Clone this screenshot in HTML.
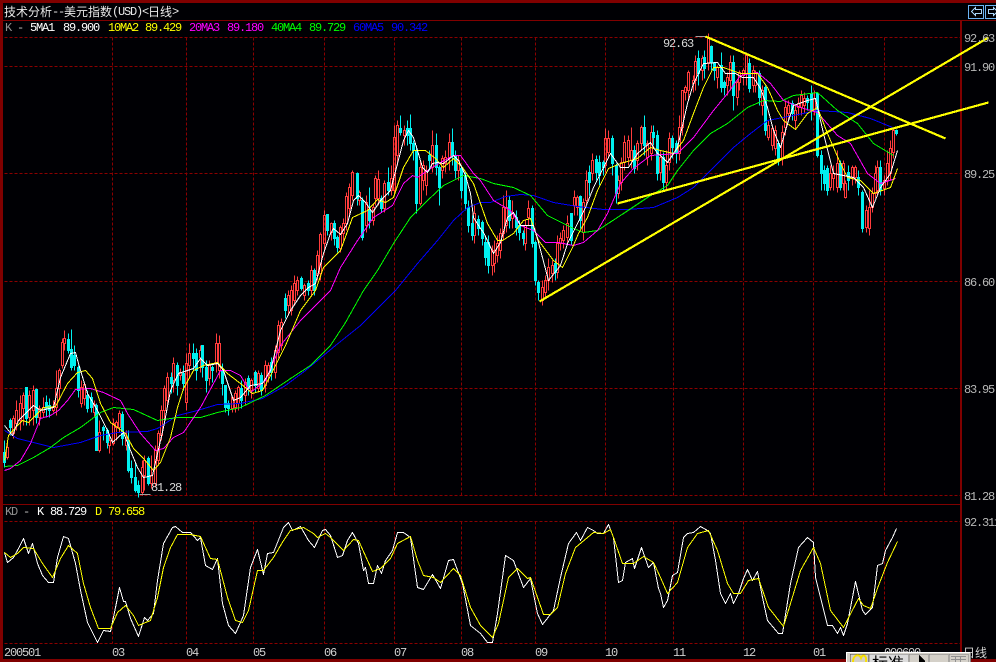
<!DOCTYPE html>
<html><head><meta charset="utf-8"><style>
html,body{margin:0;padding:0;background:#000;overflow:hidden}
svg{display:block}
text{font-family:"Liberation Mono",monospace;font-size:12px;letter-spacing:-1.2px;white-space:pre}
.c{font-family:"WenQuanYi Zen Hei","Noto Sans CJK SC",sans-serif;letter-spacing:0}
.g{fill:#b8b8b8}.l{fill:#d8d8d8}
</style></head><body>
<svg width="996" height="662" viewBox="0 0 996 662" xmlns="http://www.w3.org/2000/svg">
<rect width="996" height="662" fill="#000004"/>
<g shape-rendering="crispEdges">
<g fill="none" stroke="#8b0000" stroke-dasharray="3 2" transform="translate(.5,.5)">
<path d="M4 37H960M4 66H960M4 173H960M4 281H960M4 388H960M4 495H960M4 521H960M4 643H960"/>
<path d="M112 37V495M186 37V495M253 37V495M324 37V495M394 37V495M461 37V495M535 37V495M605 37V495M673 37V495M743 37V495M813 37V495M884 37V495M112 521V643M186 521V643M253 521V643M324 521V643M394 521V643M461 521V643M535 521V643M605 521V643M673 521V643M743 521V643M813 521V643M884 521V643"/>
</g>
<rect x="0" y="0" width="996" height="3" fill="#800000"/>
<rect x="0" y="0" width="3" height="662" fill="#800000"/>
<rect x="0" y="20" width="996" height="1" fill="#800000"/>
<rect x="0" y="504" width="961" height="1" fill="#800000"/>
<rect x="960" y="20" width="2" height="642" fill="#800000"/>
<rect x="0" y="659" width="996" height="3" fill="#800000"/>
<g transform="translate(.5,.5)" stroke-width="1">
<path fill="none" stroke="#ff3c3c" d="M7 443V447M6 447h2V457h-2zM7 457V459M13 415V418M12 418h2V433h-2zM13 433V438M16 400V410M15 410h2V423h-2zM16 423V430M20 395V403M19 403h2V420h-2zM20 420V430M23 392V395M22 395h2V408h-2zM23 408V425M29 390V395M28 395h2V417h-2zM29 417V425M33 385V390M32 390h2V410h-2zM33 410V425M39 405V408M38 408h2V417h-2zM39 417V425M43 397V407M42 407h2V412h-2zM43 412V417M53 400V407M52 407h2V410h-2zM53 410V412M56 370V388M55 388h2V407h-2zM56 407V415M59 368V370M58 370h2V388h-2zM59 388V400M62 338V342M61 342h2V365h-2zM62 365V368M64 330V338M63 338h2V343h-2zM64 343V350M81 380V387M80 387h2V403h-2zM81 403V407M84 383V384M83 384h2V398h-2zM84 398V405M94 400V404M93 404h2V412h-2zM94 412V416M99 420V432M98 432h2V450h-2zM99 450V452M109 435V440M108 440h2V445h-2zM109 445V453M113 418V423M112 423h2V443h-2zM113 443V445M116 420V422M115 422h2V427h-2zM116 427V440M119 410V413M118 413h2V427h-2zM119 427V432M126 430V437M125 437h2V445h-2zM126 445V450M142 460V467M141 467h2V492h-2zM142 492V495M144 455V460M143 460h2V475h-2zM144 475V490M151 455V475M150 475h2V483h-2zM151 483V488M155 445V450M154 450h2V483h-2zM155 483V487M158 430V433M157 433h2V460h-2zM158 460V465M161 405V410M160 410h2V435h-2zM161 435V440M164 385V388M163 388h2V410h-2zM164 410V420M167 372V377M166 377h2V400h-2zM167 400V405M173 357V363M172 363h2V380h-2zM173 380V392M180 368V372M179 372h2V375h-2zM180 375V380M186 353V363M185 363h2V402h-2zM186 402V410M189 343V353M188 353h2V365h-2zM189 365V378M200 345V350M199 350h2V357h-2zM200 357V372M209 360V365M208 365h2V378h-2zM209 378V385M216 333V343M215 343h2V362h-2zM216 362V372M219 335V343M218 343h2V370h-2zM219 370V378M232 397V397M231 397h2V408h-2zM232 408V412M235 390V393M234 393h2V407h-2zM235 407V412M238 385V387M237 387h2V403h-2zM238 403V410M245 378V382M244 382h2V395h-2zM245 395V405M251 378V380M250 380h2V390h-2zM251 390V398M258 370V373M257 373h2V388h-2zM258 388V392M265 360V365M264 365h2V385h-2zM265 385V392M268 362V365M267 365h2V375h-2zM268 375V382M275 345V350M274 350h2V372h-2zM275 372V378M278 320V325M277 325h2V352h-2zM278 352V358M281 318V322M280 322h2V345h-2zM281 345V350M288 290V295M287 295h2V305h-2zM288 305V315M291 285V290M290 290h2V310h-2zM291 310V315M294 275V283M293 283h2V300h-2zM294 300V305M297 276V280M296 280h2V290h-2zM297 290V295M304 283V285M303 285h2V295h-2zM304 295V300M311 265V270M310 270h2V290h-2zM311 290V295M317 250V255M316 255h2V275h-2zM317 275V280M320 232V234M319 234h2V273h-2zM320 273V280M324 210V215M323 215h2V243h-2zM324 243V250M331 222V223M330 223h2V232h-2zM331 232V240M340 225V227M339 227h2V248h-2zM340 248V252M343 218V223M342 223h2V233h-2zM343 233V240M346 192V196M345 196h2V223h-2zM346 223V230M349 183V187M348 187h2V208h-2zM349 208V215M352 170V172M351 172h2V195h-2zM352 195V200M359 190V192M358 192h2V200h-2zM359 200V205M366 195V202M365 202h2V225h-2zM366 225V232M373 203V207M372 207h2V220h-2zM373 220V225M375 175V178M374 178h2V198h-2zM375 198V205M378 170V179M377 179h2V198h-2zM378 198V205M384 180V183M383 183h2V208h-2zM384 208V212M391 165V178M390 178h2V190h-2zM391 190V195M394 125V137M393 137h2V190h-2zM394 190V195M397 120V125M396 125h2V155h-2zM397 155V165M404 125V130M403 130h2V135h-2zM404 135V145M420 160V167M419 167h2V203h-2zM420 203V205M423 160V165M422 165h2V180h-2zM423 180V190M426 165V170M425 170h2V185h-2zM426 185V195M432 130V145M431 145h2V167h-2zM432 167V172M442 155V158M441 158h2V170h-2zM442 170V178M445 150V157M444 157h2V163h-2zM445 163V172M449 133V142M448 142h2V157h-2zM449 157V170M458 155V160M457 160h2V170h-2zM458 170V180M474 205V213M473 213h2V235h-2zM474 235V243M492 245V250M491 250h2V265h-2zM492 265V275M494 240V250M493 250h2V263h-2zM494 263V272M497 235V243M496 243h2V255h-2zM497 255V262M500 228V233M499 233h2V250h-2zM500 250V258M503 195V207M502 207h2V233h-2zM503 233V240M506 190V207M505 207h2V225h-2zM506 225V232M512 200V212M511 212h2V218h-2zM512 218V228M525 220V225M524 225h2V243h-2zM525 243V250M528 200V208M527 208h2V217h-2zM528 217V225M542 280V287M541 287h2V300h-2zM542 300V305M545 275V280M544 280h2V292h-2zM545 292V297M548 258V267M547 267h2V280h-2zM548 280V290M552 260V265M551 265h2V273h-2zM552 273V282M557 235V243M556 243h2V272h-2zM557 272V278M560 232V238M559 238h2V243h-2zM560 243V250M563 225V230M562 230h2V240h-2zM563 240V248M567 215V223M566 223h2V237h-2zM567 237V243M574 190V197M573 197h2V205h-2zM574 205V215M577 195V197M576 197h2V207h-2zM577 207V215M583 198V202M582 202h2V232h-2zM583 232V240M586 170V180M585 180h2V200h-2zM586 200V205M592 153V160M591 160h2V173h-2zM592 173V180M605 128V138M604 138h2V165h-2zM605 165V172M608 130V138M607 138h2V152h-2zM608 152V158M618 175V180M617 180h2V193h-2zM618 193V198M621 157V162M620 162h2V182h-2zM621 182V190M624 135V142M623 142h2V162h-2zM624 162V170M628 135V140M627 140h2V157h-2zM628 157V165M631 127V150M630 150h2V160h-2zM631 160V168M637 140V143M636 143h2V160h-2zM637 160V170M641 125V127M640 127h2V143h-2zM641 143V150M647 140V143M646 143h2V157h-2zM647 157V165M651 125V132M650 132h2V153h-2zM651 153V160M660 150V157M659 157h2V172h-2zM660 172V180M666 150V165M665 165h2V182h-2zM666 182V190M669 132V138M668 138h2V162h-2zM669 162V170M679 115V127M678 127h2V153h-2zM679 153V160M682 90V90M681 90h2V127h-2zM682 127V135M685 85V87M684 87h2V92h-2zM685 92V100M688 70V72M687 72h2V90h-2zM688 90V100M693 75V80M692 80h2V83h-2zM693 83V92M695 55V61M694 61h2V80h-2zM695 80V90M702 55V58M701 58h2V70h-2zM702 70V80M708 33V37M707 37h2V63h-2zM708 63V70M717 65V67M716 67h2V77h-2zM717 77V88M727 72V77M726 77h2V85h-2zM727 85V95M730 55V62M729 62h2V80h-2zM730 80V90M737 80V82M736 82h2V97h-2zM737 97V105M739 70V72M738 72h2V82h-2zM739 82V90M743 68V70M742 70h2V75h-2zM743 75V85M746 52V55M745 55h2V73h-2zM746 73V85M753 65V70M752 70h2V85h-2zM753 85V92M755 70V73M754 73h2V85h-2zM755 85V92M762 85V90M761 90h2V105h-2zM762 105V115M768 120V125M767 125h2V137h-2zM768 137V140M772 125V128M771 128h2V145h-2zM772 145V150M775 125V130M774 130h2V148h-2zM775 148V155M782 125V132M781 132h2V158h-2zM782 158V165M785 100V107M784 107h2V127h-2zM785 127V135M788 100V105M787 105h2V113h-2zM788 113V120M795 105V110M794 110h2V120h-2zM795 120V128M798 97V103M797 103h2V107h-2zM798 107V115M801 90V95M800 95h2V107h-2zM801 107V115M804 92V98M803 98h2V105h-2zM804 105V112M814 90V98M813 98h2V110h-2zM814 110V115M830 165V173M829 173h2V187h-2zM830 187V190M833 165V173M832 173h2V178h-2zM833 178V190M837 150V163M836 163h2V187h-2zM837 187V192M843 160V163M842 163h2V183h-2zM843 183V190M845 180V183M844 183h2V197h-2zM845 197V198M852 165V167M851 167h2V177h-2zM852 177V185M855 165V167M854 167h2V177h-2zM855 177V183M866 205V210M865 210h2V227h-2zM866 227V232M869 190V207M868 207h2V228h-2zM869 228V235M872 187V193M871 193h2V207h-2zM872 207V212M875 165V173M874 173h2V193h-2zM875 193V198M877 160V167M876 167h2V190h-2zM877 190V195M884 175V180M883 180h2V188h-2zM884 188V195M887 150V163M886 163h2V180h-2zM887 180V185M890 140V148M889 148h2V173h-2zM890 173V180M893 128V130M892 130h2V152h-2zM893 152V158"/>
<path fill="#00f0f0" stroke="#00f0f0" d="M4 440V467M3 452h2V462h-2zM10 418V435M9 420h2V427h-2zM26 387V425M25 387h2V418h-2zM36 388V423M35 389h2V417h-2zM46 395V417M45 402h2V408h-2zM49 398V417M48 405h2V410h-2zM68 333V353M67 339h2V350h-2zM71 329V370M70 349h2V367h-2zM74 345V370M73 355h2V365h-2zM78 365V397M77 367h2V390h-2zM87 390V412M86 395h2V408h-2zM91 392V412M90 397h2V407h-2zM96 403V450M95 405h2V450h-2zM103 425V440M102 427h2V430h-2zM107 428V448M106 430h2V442h-2zM122 411V445M121 414h2V438h-2zM128 430V472M127 440h2V470h-2zM131 460V483M130 468h2V477h-2zM135 463V492M134 477h2V490h-2zM138 480V497M137 485h2V492h-2zM148 456V485M147 458h2V483h-2zM171 372V393M170 377h2V383h-2zM177 362V395M176 365h2V385h-2zM183 365V390M182 373h2V383h-2zM193 343V370M192 353h2V358h-2zM196 348V380M195 353h2V370h-2zM202 345V377M201 345h2V367h-2zM206 360V392M205 367h2V380h-2zM212 365V382M211 367h2V370h-2zM222 363V395M221 370h2V383h-2zM225 385V412M224 385h2V407h-2zM228 400V415M227 403h2V408h-2zM241 380V408M240 388h2V400h-2zM248 375V395M247 378h2V388h-2zM255 370V392M254 372h2V385h-2zM261 372V395M260 375h2V390h-2zM271 357V380M270 362h2V372h-2zM285 293V318M284 298h2V310h-2zM301 276V290M300 278h2V288h-2zM308 280V295M307 283h2V290h-2zM314 268V295M313 270h2V290h-2zM327 214V235M326 214h2V230h-2zM334 220V245M333 223h2V238h-2zM337 235V252M336 237h2V247h-2zM357 172V205M356 173h2V198h-2zM362 197V240M361 200h2V237h-2zM369 187V228M368 209h2V220h-2zM381 195V212M380 198h2V208h-2zM388 167V195M387 182h2V190h-2zM400 115V135M399 128h2V132h-2zM407 120V145M406 128h2V135h-2zM410 114V150M409 128h2V143h-2zM413 140V160M412 143h2V150h-2zM416 145V213M415 150h2V203h-2zM429 150V170M428 155h2V160h-2zM436 133V175M435 145h2V167h-2zM439 165V205M438 167h2V187h-2zM452 128V165M451 142h2V155h-2zM455 150V178M454 155h2V170h-2zM461 165V198M460 168h2V190h-2zM465 172V210M464 175h2V203h-2zM468 200V232M467 207h2V225h-2zM472 215V240M471 223h2V235h-2zM478 215V235M477 219h2V228h-2zM482 220V245M481 222h2V238h-2zM485 235V265M484 242h2V257h-2zM488 235V273M487 242h2V265h-2zM509 195V228M508 200h2V220h-2zM516 210V235M515 217h2V227h-2zM519 220V240M518 225h2V232h-2zM523 230V245M522 233h2V238h-2zM532 205V247M531 208h2V243h-2zM535 240V285M534 242h2V280h-2zM538 280V300M537 282h2V292h-2zM555 258V280M554 263h2V272h-2zM571 213V245M570 213h2V240h-2zM580 195V228M579 196h2V220h-2zM589 165V195M588 172h2V182h-2zM596 155V180M595 159h2V172h-2zM599 155V185M598 162h2V175h-2zM603 160V175M602 162h2V167h-2zM612 135V175M611 138h2V163h-2zM616 163V203M615 165h2V193h-2zM634 145V173M633 150h2V168h-2zM644 115V155M643 127h2V145h-2zM653 125V145M652 132h2V137h-2zM657 130V180M656 135h2V173h-2zM663 152V190M662 157h2V182h-2zM672 135V158M671 138h2V147h-2zM676 140V163M675 143h2V153h-2zM698 50V85M697 58h2V73h-2zM704 50V78M703 57h2V68h-2zM711 45V70M710 46h2V62h-2zM714 62V80M713 62h2V70h-2zM721 52V92M720 65h2V87h-2zM724 80V95M723 82h2V87h-2zM733 55V110M732 62h2V95h-2zM749 58V92M748 63h2V88h-2zM759 70V105M758 73h2V97h-2zM765 85V135M764 87h2V130h-2zM778 140V165M777 143h2V158h-2zM792 100V120M791 103h2V113h-2zM807 95V110M806 98h2V102h-2zM811 85V120M810 93h2V110h-2zM817 92V157M816 93h2V155h-2zM821 150V190M820 155h2V173h-2zM824 165V190M823 170h2V183h-2zM827 165V195M826 168h2V190h-2zM840 160V190M839 163h2V187h-2zM848 165V190M847 172h2V180h-2zM858 170V195M857 177h2V187h-2zM862 190V232M861 192h2V228h-2zM880 160V195M879 167h2V190h-2zM896 129V135M895 130h2V133h-2z"/>
<g fill="none" stroke-linejoin="round">
<polyline stroke="#0000ff" points="4,430 17,438 37,443 53,447 80,442 100,435 117,432 147,431 157,428 177,415 197,410 217,404 240,403 262,398 285,385 305,370 335,345 360,325 395,290 417,263 437,240 453,220 467,207 480,202 490,202 505,196 520,194 533,195 553,202 577,206 603,209 627,209 653,207 677,197 693,187 713,167 733,147 750,133 767,120 793,115 817,110 847,112 870,118 892,127"/>
<polyline stroke="#00ff00" points="4,466 17,465 33,457 50,447 63,437 80,427 100,412 113,407 133,409 157,420 177,417 200,417 217,412 240,407 265,395 290,378 310,365 330,345 345,322 363,290 377,270 393,243 410,217 427,200 443,185 463,175 480,178 493,183 513,187 530,195 547,215 573,228 583,232 597,230 623,213 647,197 667,185 677,170 693,150 710,133 727,123 747,107 763,100 780,101 793,95 817,92 837,110 857,123 873,143 893,155"/>
<polyline stroke="#ff00ff" points="4,470 10,468 20,460 30,443 40,418 50,415 58,410 67,400 75,389 90,388 103,392 120,400 127,413 140,433 155,450 163,448 173,437 183,432 200,407 213,383 220,370 230,370 240,375 250,392 265,380 280,345 300,320 315,305 330,290 340,267 357,240 373,217 392,205 403,183 412,175 417,177 430,168 440,162 453,155 460,155 473,173 480,180 493,200 510,210 520,225 533,230 545,242 558,242 573,245 583,242 597,230 607,213 620,183 633,168 650,155 677,153 693,137 713,110 727,93 740,75 757,72 770,83 783,100 800,107 817,112 837,135 850,143 867,173 880,183 895,178"/>
<polyline stroke="#ffff00" points="4,460 8,435 17,425 22,420 28,422 37,413 43,407 55,406 67,383 77,372 85,370 92,378 100,403 110,422 117,427 125,433 133,448 143,458 153,470 160,462 170,437 177,407 183,388 193,370 203,365 217,362 227,373 240,383 252,393 262,390 270,375 285,345 300,310 315,290 323,267 340,250 352,217 367,210 377,199 385,202 393,197 403,167 413,150 425,150 435,158 443,167 453,158 462,167 473,183 480,203 487,223 497,240 502,240 513,233 523,220 530,218 538,240 553,260 562,267 572,247 578,233 587,217 597,190 608,168 620,163 637,158 650,147 660,150 673,153 683,140 693,113 703,87 713,67 723,67 740,73 757,73 767,87 777,110 783,120 795,129 807,113 817,107 827,133 840,163 847,177 860,180 873,193 890,187 897,168"/>
<polyline stroke="#ffffff" points="4,425 12,435 18,420 25,413 33,405 40,410 53,407 60,377 70,353 75,352 78,363 87,393 97,410 107,430 112,442 123,432 130,450 137,467 143,477 152,475 157,453 163,427 170,390 178,373 193,368 200,358 207,365 217,363 223,370 233,400 240,397 250,385 262,383 270,370 280,330 290,310 300,295 308,287 315,283 323,253 330,233 333,228 340,234 347,223 353,200 358,195 365,202 372,212 380,200 390,190 397,163 403,140 408,130 413,137 417,150 422,167 427,172 432,163 437,162 443,163 453,155 458,160 465,175 470,193 473,217 480,228 483,232 493,253 500,242 507,217 513,212 520,225 533,225 538,242 548,280 560,265 567,243 577,223 585,207 593,187 600,173 610,153 620,167 628,167 637,153 650,142 657,153 660,155 667,162 677,147 687,103 693,83 703,63 717,62 725,73 735,73 742,77 753,77 760,88 767,107 773,130 780,147 788,120 793,105 807,100 815,98 823,133 833,173 853,177 863,187 872,207 880,187 890,173 897,150"/>
<polyline stroke="#ffffff" points="4,552 7,562 13,557 18,548 23,538 28,553 32,543 37,563 42,575 48,582 53,582 57,557 63,536 68,538 75,563 80,590 87,622 97,642 103,630 110,631 115,607 119,587 123,601 125,601 130,618 138,636 144,617 147,620 153,613 157,580 163,543 172,527 175,526 182,532 190,532 197,540 200,537 205,565 212,569 217,558 222,603 228,625 235,633 243,615 250,567 257,549 263,574 267,553 273,552 283,527 288,522 292,530 300,526 308,540 314,547 322,530 325,529 330,535 337,557 342,555 347,540 352,532 358,543 363,570 365,567 368,583 373,583 377,565 381,573 385,560 392,550 397,532 403,532 410,537 417,587 423,589 432,574 440,588 448,560 453,559 462,583 470,625 480,633 487,642 492,642 497,613 505,555 513,560 523,587 530,578 537,613 542,624 553,610 560,577 568,543 576,532 580,540 587,527 593,530 597,533 603,533 608,524 613,537 618,582 622,580 625,562 632,558 634,568 641,547 648,567 653,562 658,588 660,593 663,607 667,600 672,575 677,572 683,537 687,533 693,532 700,526 707,530 710,533 715,560 720,593 725,603 730,593 733,603 738,593 743,578 747,569 752,580 757,571 762,597 767,620 778,633 782,633 790,583 798,547 807,537 813,542 815,577 827,625 832,625 837,633 840,627 843,635 847,623 855,581 862,610 865,614 872,607 877,565 882,563 885,550 892,537 896,528"/>
<polyline stroke="#ffff00" points="4,552 10,557 17,553 23,547 33,548 42,563 52,577 60,558 68,545 77,553 83,583 90,607 98,628 110,628 117,612 125,605 133,615 138,625 150,620 157,597 163,567 170,547 177,534 190,534 200,536 210,558 217,559 227,597 235,620 242,622 248,610 257,570 263,570 273,557 283,540 290,530 303,527 313,533 317,537 325,533 330,537 343,550 353,539 358,540 372,571 380,568 390,558 397,543 410,536 417,560 423,575 433,577 440,582 453,568 460,575 470,607 480,625 492,637 498,623 508,577 517,568 527,578 530,577 543,614 550,614 557,607 565,573 575,547 593,532 603,533 610,529 613,537 622,563 633,563 643,556 653,562 660,577 667,593 677,582 687,547 697,533 708,530 717,550 727,583 733,593 740,593 748,580 758,578 768,607 783,626 800,570 813,547 820,563 830,610 843,627 858,598 863,605 870,608 878,585 887,562 897,541"/>
<path stroke="#a0a0a0" d="M695 36H705M139 494H150"/>
<path stroke="#ffff00" stroke-width="2.2" d="M539 301L988 37M617 203L988 102M705 36L945 138"/>
</g>
</g>
</g>
<text class="c" x="4" y="16" fill="#e8e8e8" style="font-size:12px">技术分析</text>
<text x="52" y="15" fill="#e8e8e8">--</text>
<text class="c" x="64" y="16" fill="#e8e8e8" style="font-size:12px">美元指数</text>
<text x="112" y="15" fill="#e8e8e8">(USD)&lt;</text>
<text class="c" x="148" y="16" fill="#e8e8e8" style="font-size:12px">日线</text>
<text x="172" y="15" fill="#e8e8e8">&gt;</text>
<text x="5" y="31" fill="#909090">K</text><text x="17" y="31" fill="#c0c0c0">-</text>
<text x="30" y="31" fill="#fff">5MA1</text><text x="63" y="31" fill="#fff">89.900</text>
<text x="108" y="31" fill="#ff0">10MA2</text><text x="145" y="31" fill="#ff0">89.429</text>
<text x="189" y="31" fill="#f0f">20MA3</text><text x="227" y="31" fill="#f0f">89.180</text>
<text x="271" y="31" fill="#0f0">40MA4</text><text x="309" y="31" fill="#0f0">89.729</text>
<text x="353" y="31" fill="#00f">60MA5</text><text x="391" y="31" fill="#00f">90.342</text>
<text class="g" x="964" y="42">92.63</text><text class="g" x="964" y="71">91.90</text>
<text class="g" x="964" y="178">89.25</text><text class="g" x="964" y="286">86.60</text>
<text class="g" x="964" y="393">83.95</text><text class="g" x="964" y="500">81.28</text>
<text class="g" x="964" y="526">92.311</text>
<text class="l" x="663" y="47">92.63</text><text class="l" x="151" y="491">81.28</text>
<text x="5" y="515" fill="#909090">KD</text><text x="23" y="515" fill="#c0c0c0">-</text>
<text x="37" y="515" fill="#fff">K</text><text x="50" y="515" fill="#fff">88.729</text>
<text x="95" y="515" fill="#ff0">D</text><text x="108" y="515" fill="#ff0">79.658</text>
<g fill="#d0d0d0"><text x="4" y="656">200501</text><text x="112" y="656">03</text><text x="186" y="656">04</text><text x="253" y="656">05</text><text x="324" y="656">06</text><text x="394" y="656">07</text><text x="461" y="656">08</text><text x="535" y="656">09</text><text x="605" y="656">10</text><text x="673" y="656">11</text><text x="743" y="656">12</text><text x="813" y="656">01</text><text x="884" y="656">000600</text></g>
<text class="c" x="963" y="657" fill="#d0d0d0" style="font-size:12px">日线</text>
<g fill="none" shape-rendering="crispEdges">
<rect x="968.5" y="5.5" width="15" height="13" stroke="#6cb4f4"/>
<rect x="985.5" y="5.5" width="15" height="13" stroke="#6cb4f4"/>
<path stroke="#a8d4f8" transform="translate(.5,.5)" d="M971 11L975 7V9H981V13H975V15ZM997 11L993 7V9H988V13H993V15Z"/>
</g>
<g shape-rendering="crispEdges">
<rect x="846" y="652" width="125" height="10" fill="#d4d0c8"/>
<path fill="none" stroke="#fff" d="M846.5 662V652.5H970.5"/>
<path fill="none" stroke="#808080" d="M970.5 652.5V662"/>
<rect x="850" y="654" width="18" height="8" fill="#d4d0c8" stroke="#404040" stroke-width=".5"/>
<rect x="869" y="654" width="39" height="8" fill="#dcdcdc" stroke="#808080" stroke-width=".5"/>
<rect x="909" y="654" width="19" height="8" fill="#d4d0c8" stroke="#808080" stroke-width=".5"/>
<rect x="929" y="654" width="19" height="8" fill="#d4d0c8" stroke="#808080" stroke-width=".5"/>
<rect x="949" y="654" width="19" height="8" fill="#d4d0c8" stroke="#808080" stroke-width=".5"/>
<path fill="none" stroke="#909090" d="M951 656.5H966M951 659.5H966M955.5 656V662M960.5 656V662"/>
<path fill="#000" d="M919 655L925 661V662H919Z"/>
</g>
<path fill="none" stroke="#f8e000" stroke-width="2" d="M853 662C853 655 859 653 861 658C863 653 867 656 866 662"/>
<text class="c" x="872" y="669" fill="#000" style="font-size:16px">标准</text>
</svg>
</body></html>
